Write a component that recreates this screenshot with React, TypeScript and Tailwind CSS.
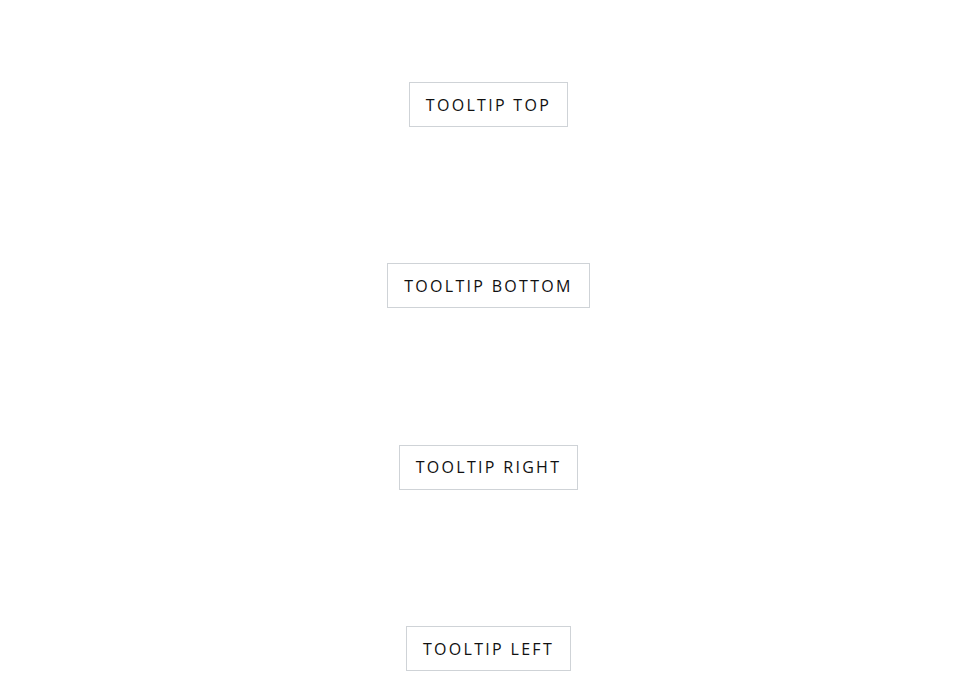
export default function App() {
  const labels = ["TOOLTIP TOP", "TOOLTIP BOTTOM", "TOOLTIP RIGHT", "TOOLTIP LEFT"];
  return (
    <div className="min-h-[684px] w-full bg-white flex flex-col items-center pt-[82px] pl-[2px] gap-[136.4px]" style={{ fontFamily: '"Open Sans", "Noto Sans", sans-serif' }}>
      {labels.map((l) => (
        <button key={l} className="h-[45px] px-4 border border-[#cfd3d7] bg-white text-[16px] tracking-[2.3px] text-[#111] leading-none">
          {l}
        </button>
      ))}
    </div>
  );
}
